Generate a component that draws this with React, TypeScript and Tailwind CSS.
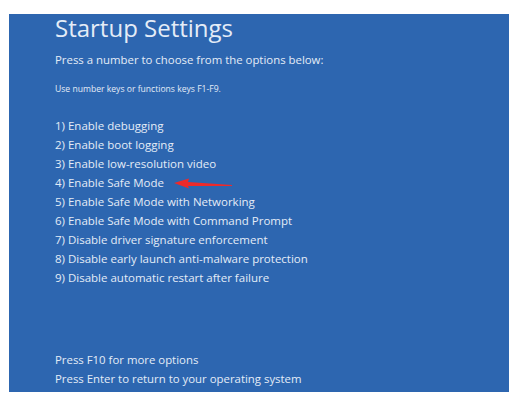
const options = [
  "1) Enable debugging",
  "2) Enable boot logging",
  "3) Enable low-resolution video",
  "4) Enable Safe Mode",
  "5) Enable Safe Mode with Networking",
  "6) Enable Safe Mode with Command Prompt",
  "7) Disable driver signature enforcement",
  "8) Disable early launch anti-malware protection",
  "9) Disable automatic restart after failure",
];

function Arrow() {
  return (
    <svg width="62" height="12" viewBox="0 0 62 12" className="absolute left-[119px] top-[5px]">
      <path d="M0 5 L15 0.5 L14 4 L58 7 L58 8 L14 8 L15 10.5 Z" fill="#ee2a2a" />
    </svg>
  );
}

export default function App() {
  return (
    <div className="w-[517px] h-[404px] bg-white pt-[14px] pl-[9px] font-['Open_Sans',sans-serif]">
      <div className="w-[500px] h-[378px] bg-[#2d66b0] text-[#e4ecf7] pl-[46px] flex flex-col">
        <h1 className="text-[24px] leading-[28px]">Startup Settings</h1>
        <p className="text-[11.4px] leading-[16px] mt-[10px]">Press a number to choose from the options below:</p>
        <p className="text-[8.6px] leading-[11px] mt-[16px]">Use number keys or functions keys F1-F9.</p>
        <ul className="mt-[21px] flex flex-col">
          {options.map((o, i) => (
            <li key={o} className="relative text-[11.5px] leading-[19px]">
              {o}
              {i === 3 && <Arrow />}
            </li>
          ))}
        </ul>
        <div className="mt-auto mb-[4px] flex flex-col">
          <p className="text-[11.4px] leading-[19px]">Press F10 for more options</p>
          <p className="text-[11.4px] leading-[19px]">Press Enter to return to your operating system</p>
        </div>
      </div>
    </div>
  );
}
